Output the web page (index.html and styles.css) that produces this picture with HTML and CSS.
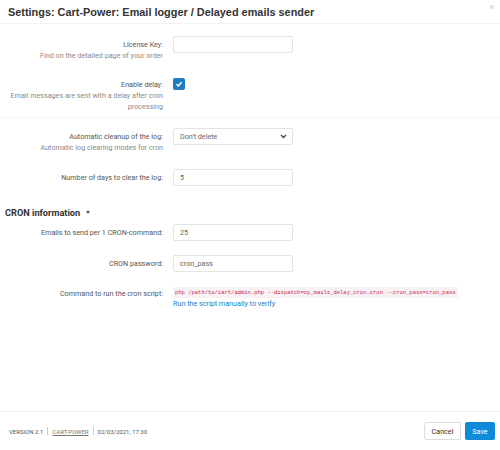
FILE: index.html
```html
<!DOCTYPE html>
<html>
<head>
<meta charset="utf-8">
<link rel="stylesheet" href="styles.css">
</head>
<body>
<div class="modal">
  <div class="header">
    <h1 class="title">Settings: Cart-Power: Email logger / Delayed emails sender</h1>
    <span class="close">×</span>
  </div>
  <div class="body">
    <div class="group g1">
      <div class="row">
        <div class="label">License Key:<div class="desc">Find on the detailed page of your order</div></div>
        <div class="control"><div class="input"></div></div>
      </div>
      <div class="row r-delay">
        <div class="label">Enable delay:<div class="desc">Email messages are sent with a delay after cron processing</div></div>
        <div class="control"><span class="check"><svg width="8" height="8" viewBox="0 0 8 8"><path d="M1.5 4.2 L3.3 6 L6.6 2.3" fill="none" stroke="#fff" stroke-width="1.5"/></svg></span></div>
      </div>
    </div>
    <div class="group g2">
      <div class="row">
        <div class="label">Automatic cleanup of the log:<div class="desc">Automatic log clearing modes for cron</div></div>
        <div class="control"><div class="input select">Don't delete<svg class="chev" width="7" height="5" viewBox="0 0 7 5"><path d="M1 1 L3.5 3.5 L6 1" fill="none" stroke="#444" stroke-width="1.3"/></svg></div></div>
      </div>
      <div class="row r-days">
        <div class="label">Number of days to clear the log:</div>
        <div class="control"><div class="input">5</div></div>
      </div>
    </div>
    <h2 class="section">CRON information <span class="caret"></span></h2>
    <div class="group g3">
      <div class="row">
        <div class="label">Emails to send per 1 CRON-command:</div>
        <div class="control"><div class="input">25</div></div>
      </div>
      <div class="row r-pass">
        <div class="label">CRON password:</div>
        <div class="control"><div class="input">cron_pass</div></div>
      </div>
      <div class="row r-cmd">
        <div class="label">Command to run the cron script:</div>
        <div class="control"><code class="code">php /path/to/cart/admin.php --dispatch=cp_mails_delay_cron.cron --cron_pass=cron_pass</code><a class="link">Run the script manually to verify</a></div>
      </div>
    </div>
  </div>
  <div class="footer">
    <div class="meta">VERSION 2.1<span class="sep"></span><a class="cp">CART-POWER</a><span class="sep"></span>02/03/2021, 17:30</div>
    <div class="buttons"><span class="btn cancel">Cancel</span><span class="btn save">Save</span></div>
  </div>
</div>
</body>
</html>
```
FILE: styles.css
```css
html, body { margin: 0; padding: 0; background: #fff; }
body { font-family: Roboto, "Liberation Sans", Arial, sans-serif; color: #333; }
.modal { width: 500px; height: 450px; display: flex; flex-direction: column; }
.header { height: 24px; border-bottom: 1px solid #f2f2f2; display: flex; align-items: center; justify-content: space-between; padding: 0 6px 0 8px; box-sizing: border-box; }
.title { margin: 0; font-family: "Liberation Sans", Arial, sans-serif; font-size: 10.9px; font-weight: bold; color: #333; }
.close { color: #ccc; font-size: 9px; align-self: flex-start; margin-top: 2px; }
.body { flex: 1; }
.group { display: flex; flex-direction: column; }
.g1 { padding-top: 12px; height: 94px; box-sizing: border-box; border-bottom: 1px solid #f6f6f6; }
.g2 { padding-top: 10px; }
.row { display: flex; align-items: flex-start; }
.label { width: 163px; padding-left: 2px; text-align: right; font-size: 7.2px; line-height: 11px; color: #555; padding-top: 3px; box-sizing: border-box; }
.desc { color: #8a8a8a; }
.control { margin-left: 10px; display: flex; flex-direction: column; }
.input { width: 120px; height: 17px; box-sizing: border-box; border: 1px solid #e3e3e3; border-radius: 2px; font-size: 7.2px; line-height: 15px; padding: 0 6px; color: #666; display: flex; align-items: center; justify-content: space-between; }
.select .chev { margin-right: -1px; }
.r-delay { margin-top: 15px; }
.check { display: inline-flex; width: 12px; height: 12px; background: #1d7dc1; border-radius: 2px; align-items: center; justify-content: center; margin-top: 2px; }
.r-days { margin-top: 16px; }
.section { margin: 20px 0 0 5px; font-size: 9.2px; font-weight: bold; color: #333; display: flex; align-items: center; height: 12px; }
.caret { display: inline-block; width: 0; height: 0; border-left: 2.5px solid transparent; border-right: 2.5px solid transparent; border-top: 3px solid #555; margin-left: 6px; margin-top: 1px; }
.g3 { padding-top: 6px; }
.r-pass { margin-top: 14px; }
.r-cmd { margin-top: 15px; }
.r-cmd .label { padding-top: 1px; }
.code { font-family: "Liberation Mono", monospace; font-size: 5.5px; color: #c7254e; background: #f9f2f4; padding: 1px 2px; line-height: 9px; white-space: nowrap; }
.link { font-size: 7.2px; color: #1d7dc1; line-height: 12px; }
.footer { height: 38px; border-top: 1px solid #f3f3f3; display: flex; align-items: center; justify-content: space-between; padding: 0 5px 0 9px; }
.meta { font-size: 6px; color: #555; display: flex; align-items: center; }
.sep { display: inline-block; width: 1px; height: 8px; background: #ccc; margin: 0 4px; }
.cp { text-decoration: underline; color: #777; }
.buttons { display: flex; gap: 4px; }
.btn { height: 18px; box-sizing: border-box; font-size: 7.2px; display: inline-flex; align-items: center; justify-content: center; border-radius: 2px; }
.cancel { width: 37px; border: 1px solid #ddd; color: #333; background: #fff; }
.save { width: 30px; background: #0e8ad8; color: #fff; }
```
